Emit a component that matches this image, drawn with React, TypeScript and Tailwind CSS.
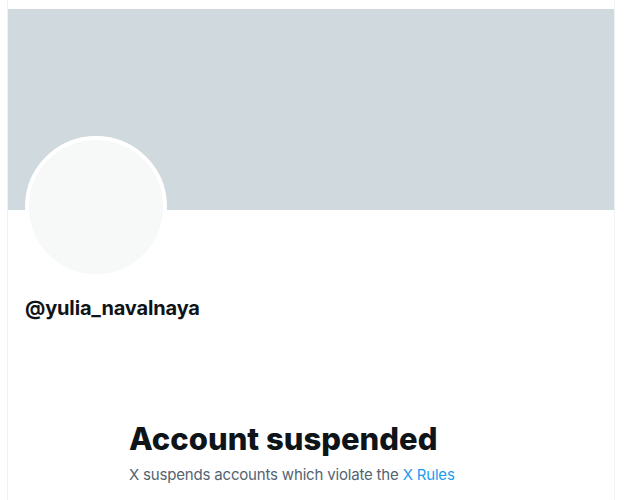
export default function App() {
  return (
    <div className="w-[634px] h-[500px] bg-white overflow-hidden" style={{ fontFamily: "Inter, 'Liberation Sans', sans-serif" }}>
      <div className="ml-[7px] w-[608px] h-[500px] border-x border-[#eff3f4] pt-[9px]">
        <div className="h-[201px] bg-[#cfd9de]" />
        <div className="pl-[17px] -mt-[74px]">
          <div className="w-[142px] h-[142px] rounded-full bg-[#f7f9f9] border-4 border-white" />
        </div>
        <div className="pl-[17px] mt-[18px] text-[20px] leading-[24px] font-bold text-[#0f1419] tracking-[-0.15px]">
          @yulia_navalnaya
        </div>
        <div className="pl-[121px] mt-[101px]">
          <div className="text-[31px] leading-[36px] font-extrabold text-[#0f1419] tracking-[0px]">Account suspended</div>
          <div className="mt-[8px] text-[15px] leading-[20px] text-[#536471] tracking-[-0.18px]">
            X suspends accounts which violate the <span className="text-[#1d9bf0]">X Rules</span>
          </div>
        </div>
      </div>
    </div>
  );
}
